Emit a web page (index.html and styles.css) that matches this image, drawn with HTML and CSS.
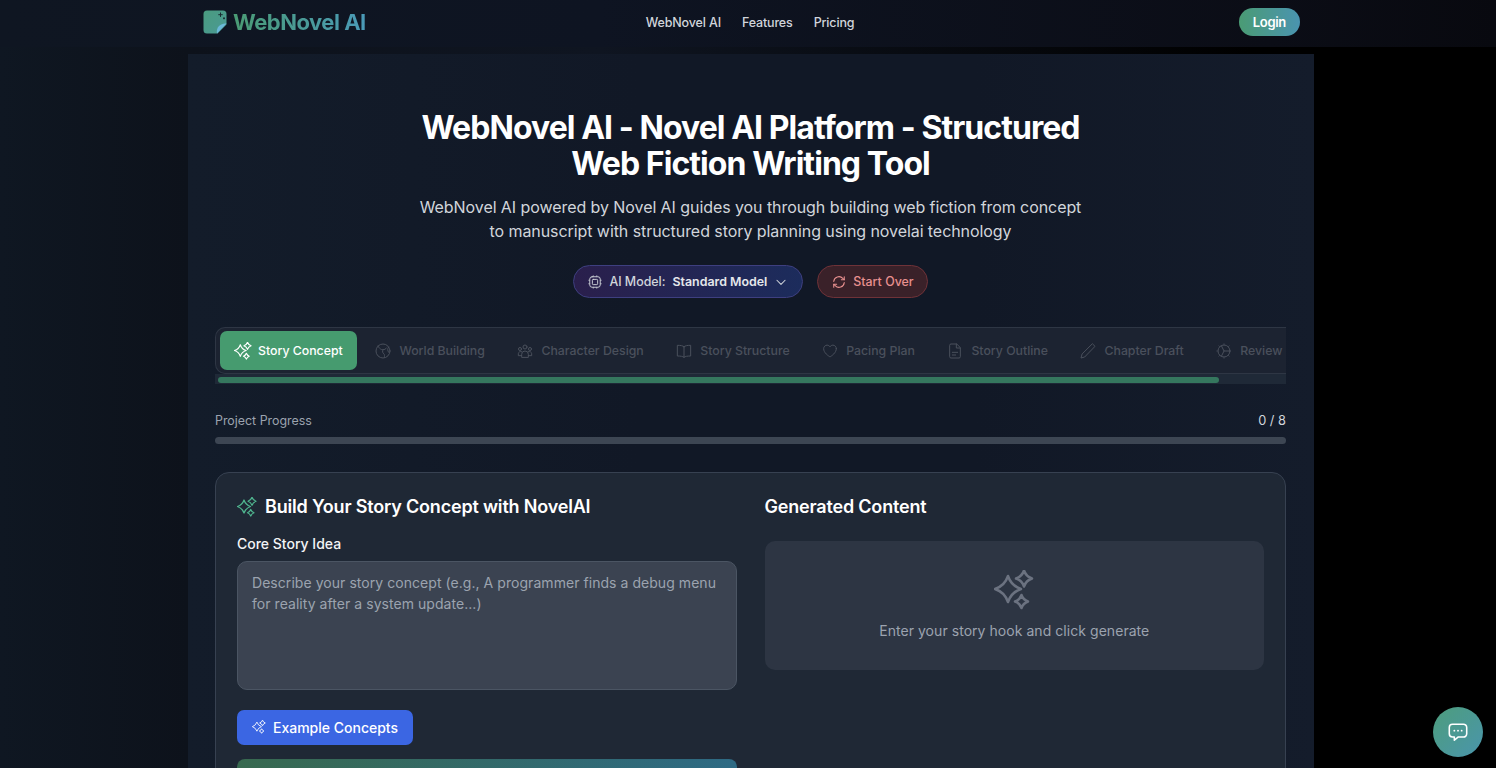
FILE: index.html
```html
<!DOCTYPE html>
<html lang="en">
<head>
    <meta charset="UTF-8">
    <meta name="viewport" content="width=device-width, initial-scale=1.0">
    <title>WebNovel AI</title>
    <link rel="stylesheet" href="styles.css">
</head>
<body>

    <!-- Shared sparkle icon -->
    <svg class="icon-defs" width="0" height="0">
        <symbol id="sparkles" viewBox="0 0 24 24">
            <path d="M8.400 3.600Q10.350 9.450 16.200 11.400Q10.350 13.350 8.400 19.200Q6.450 13.350 0.600 11.400Q6.450 9.450 8.400 3.600z"/>
            <path d="M18 0.300Q19.200 3.900 22.800 5.100Q19.200 6.300 18 9.900Q16.800 6.300 13.200 5.100Q16.800 3.900 18 0.300z"/>
            <path d="M16.500 15Q17.500 17.900 20.400 18.900Q17.500 19.900 16.500 22.800Q15.500 19.900 12.600 18.900Q15.500 17.900 16.500 15z"/>
        </symbol>
    </svg>

    <!-- Navbar -->
    <div class="navbar">
        <div class="navbar-inner">
            <a href="#" class="logo">
                <svg class="logo-mark" width="24" height="24" viewBox="0 0 24 24">
                    <defs>
                        <linearGradient id="logoFill" x1="0" y1="0" x2="1" y2="1">
                            <stop offset="0" stop-color="#4a9b7f"/>
                            <stop offset="1" stop-color="#4a9a94"/>
                        </linearGradient>
                    </defs>
                    <path d="M4 0.500h16a3.500 3.500 0 0 1 3.500 3.500v10.500l-9 9H4A3.500 3.500 0 0 1 0.500 20V4A3.500 3.500 0 0 1 4 0.500z" fill="url(#logoFill)"/>
                    <path d="M23.500 13.500l-9.500 10c-0.500-3 0-5.500 2-7.500s4.500-2.800 7.500-2.500z" fill="#6bb8d8"/>
                    <path d="M17.500 2.500v4.400M15.300 4.700h4.400M21 7.300v2M20 8.300h2" stroke="#1a2a30" stroke-width="1" fill="none"/>
                </svg>
                <span class="logo-text">WebNovel AI</span>
            </a>
            <div class="nav-links">
                <a href="#">WebNovel AI</a>
                <a href="#">Features</a>
                <a href="#">Pricing</a>
            </div>
            <a href="#" class="login-btn">Login</a>
        </div>
    </div>

    <div class="page">

        <!-- Hero -->
        <div class="hero">
            <h1>WebNovel AI - Novel AI Platform - Structured<br>Web Fiction Writing Tool</h1>
            <p>WebNovel AI powered by Novel AI guides you through building web fiction from concept<br>to manuscript with structured story planning using novelai technology</p>
            <div class="hero-actions">
                <button class="model-btn">
                    <svg width="14" height="14" viewBox="0 0 24 24" fill="none" stroke="currentColor" stroke-width="1.600" stroke-linecap="round" stroke-linejoin="round">
                        <rect x="3" y="3" width="18" height="18" rx="4"/>
                        <rect x="7.500" y="7.500" width="9" height="9" rx="1.500"/>
                        <path d="M9 1v2M15 1v2M9 21v2M15 21v2M1 9h2M1 15h2M21 9h2M21 15h2" stroke-width="1"/>
                    </svg>
                    <span>AI Model:</span>
                    <span class="model-name">Standard Model</span>
                    <svg width="14" height="14" viewBox="0 0 24 24" fill="none" stroke="currentColor" stroke-width="1.800" stroke-linecap="round" stroke-linejoin="round">
                        <path d="M5 9l7 7 7-7"/>
                    </svg>
                </button>
                <button class="restart-btn">
                    <svg width="14" height="14" viewBox="0 0 24 24" fill="none" stroke="currentColor" stroke-width="1.800" stroke-linecap="round" stroke-linejoin="round">
                        <path d="M3 11a9 9 0 0 1 15.500-5.300L21 8"/>
                        <path d="M21 3v5h-5"/>
                        <path d="M21 13a9 9 0 0 1-15.500 5.300L3 16"/>
                        <path d="M3 21v-5h5"/>
                    </svg>
                    <span>Start Over</span>
                </button>
            </div>
        </div>

        <!-- Steps -->
        <div class="steps-scroll">
            <div class="steps">
                <a href="#" class="step active">
                    <svg class="sparkle-line" width="18" height="18"><use href="#sparkles"/></svg>
                    Story Concept
                </a>
                <a href="#" class="step">
                    <svg width="16" height="16" viewBox="0 0 24 24" fill="none" stroke="currentColor" stroke-width="1.500" stroke-linecap="round" stroke-linejoin="round">
                        <circle cx="12" cy="12" r="10.500"/>
                        <path d="M4.500 4.500C7 9 9 10 12 10c2 0 4-.5 5-2.500M20.500 6c-2 3-2 5 0 8M12 10c-1.500 3-.5 5 1.500 6.500 1 1 1 3 .5 5"/>
                    </svg>
                    World Building
                </a>
                <a href="#" class="step">
                    <svg width="16" height="16" viewBox="0 0 24 24" fill="none" stroke="currentColor" stroke-width="1.500" stroke-linecap="round" stroke-linejoin="round">
                        <circle cx="12" cy="6" r="3"/>
                        <circle cx="4.500" cy="9" r="2.300"/>
                        <circle cx="19.500" cy="9" r="2.300"/>
                        <path d="M7 21v-4a5 5 0 0 1 10 0v4z"/>
                        <path d="M7 19H2v-3a3.500 3.500 0 0 1 5-3M17 19h5v-3a3.500 3.500 0 0 0-5-3"/>
                    </svg>
                    Character Design
                </a>
                <a href="#" class="step">
                    <svg width="16" height="16" viewBox="0 0 24 24" fill="none" stroke="currentColor" stroke-width="1.500" stroke-linecap="round" stroke-linejoin="round">
                        <path d="M12 5.500C10 4 7 3.500 2 3.500v16c5 0 8 .5 10 2 2-1.500 5-2 10-2v-16c-5 0-8 .5-10 2zM12 5.500v16"/>
                    </svg>
                    Story Structure
                </a>
                <a href="#" class="step">
                    <svg width="16" height="16" viewBox="0 0 24 24" fill="none" stroke="currentColor" stroke-width="1.500" stroke-linecap="round" stroke-linejoin="round">
                        <path d="M21.500 8.500c0-3-2.400-5.300-5.200-5.300-1.900 0-3.500 1-4.300 2.600-.8-1.600-2.400-2.600-4.300-2.600-2.800 0-5.200 2.300-5.200 5.300 0 6.500 7 10.500 9.500 12.500 2.500-2 9.500-6 9.500-12.500z"/>
                    </svg>
                    Pacing Plan
                </a>
                <a href="#" class="step">
                    <svg width="16" height="16" viewBox="0 0 24 24" fill="none" stroke="currentColor" stroke-width="1.500" stroke-linecap="round" stroke-linejoin="round">
                        <path d="M14 1.500H6a2 2 0 0 0-2 2v17a2 2 0 0 0 2 2h12a2 2 0 0 0 2-2V7.500z"/>
                        <path d="M14 1.500v6h6M8 14h8M8 18h5"/>
                    </svg>
                    Story Outline
                </a>
                <a href="#" class="step">
                    <svg width="16" height="16" viewBox="0 0 24 24" fill="none" stroke="currentColor" stroke-width="1.500" stroke-linecap="round" stroke-linejoin="round">
                        <path d="M19 1.500l3.500 3.500L7 21l-5.500 1.500L3 17z"/>
                    </svg>
                    Chapter Draft
                </a>
                <a href="#" class="step">
                    <svg width="16" height="16" viewBox="0 0 24 24" fill="none" stroke="currentColor" stroke-width="1.500" stroke-linecap="round" stroke-linejoin="round">
                        <circle cx="12" cy="12" r="9"/>
                        <path d="M8 4l4 8h9M12 12l-4 8"/>
                        <path d="M12 1v2M12 21v2M1 12h2M4.200 4.200l1.400 1.400M4.200 19.800l1.400-1.400M19.800 4.200l-1.400 1.400M19.800 19.800l-1.400-1.400" stroke-width="1"/>
                    </svg>
                    Review
                </a>
            </div>
            <div class="steps-track">
                <div class="steps-thumb"></div>
            </div>
        </div>

        <!-- Project progress -->
        <div class="progress-head">
            <span>Project Progress</span>
            <span class="progress-count">0 / 8</span>
        </div>
        <div class="progress-bar"></div>

        <!-- Story concept card -->
        <div class="card">
            <div class="card-col">
                <h2 class="card-title">
                    <svg class="sparkle-line sparkle-green" width="20" height="20"><use href="#sparkles"/></svg>
                    Build Your Story Concept with NovelAI
                </h2>
                <label class="field-label" for="idea">Core Story Idea</label>
                <textarea class="idea-input" id="idea" placeholder="Describe your story concept (e.g., A programmer finds a debug menu for reality after a system update...)"></textarea>
                <button class="example-btn">
                    <svg class="sparkle-line" width="14" height="14"><use href="#sparkles"/></svg>
                    Example Concepts
                </button>
                <div class="generate-btn"></div>
            </div>
            <div class="card-col">
                <h2 class="card-title">Generated Content</h2>
                <div class="output-box">
                    <svg class="sparkle-line" width="40" height="40"><use href="#sparkles"/></svg>
                    <p>Enter your story hook and click generate</p>
                </div>
            </div>
        </div>
    </div>

    <!-- Chat button -->
    <button class="chat-btn">
        <svg width="22" height="22" viewBox="0 0 24 24" fill="none" stroke="#fff" stroke-width="1.700" stroke-linecap="round" stroke-linejoin="round">
            <path d="M6 3.500h12a3.500 3.500 0 0 1 3.500 3.500v7a3.500 3.500 0 0 1-3.500 3.500h-6l-4 3.500v-3.500H6A3.500 3.500 0 0 1 2.500 14V7A3.500 3.500 0 0 1 6 3.500z"/>
            <path d="M8 10.500h.01M12 10.500h.01M16 10.500h.01" stroke-width="2"/>
        </svg>
    </button>

</body>
</html>
```

FILE: styles.css
```css
* {
    box-sizing: border-box;
}
html, body {
    height: 768px;
    overflow: hidden;
}
body {
    font-family: Inter, "Liberation Sans", sans-serif;
    background: linear-gradient(90deg, #0f1722 0, #0d121b 188px, #0f1521 600px, #000 1250px);
    margin: 0;
    padding: 0;
    color: #fff;
}
a {
    text-decoration: none;
    color: inherit;
}
button {
    font-family: inherit;
    cursor: pointer;
}
.icon-defs {
    position: absolute;
}
.sparkle-line {
    fill: none;
    stroke: currentColor;
    stroke-width: 1.500;
    stroke-linejoin: round;
    flex-shrink: 0;
}
.sparkle-green {
    color: #4fb58f;
}
/* Navbar */
.navbar {
    height: 47px;
    background: linear-gradient(90deg, #0f1622 0%, #0e1422 40%, #0b0d16 85%, #08090f 100%);
}
.navbar-inner {
    width: 1097px;
    height: 100%;
    margin-left: 203px;
    display: flex;
    align-items: center;
    padding-bottom: 3px;
}
.logo {
    display: flex;
    align-items: center;
    gap: 6px;
}
.logo-text {
    font-size: 22px;
    font-weight: 700;
    letter-spacing: -0.5px;
    background: linear-gradient(90deg, #4a9b74, #4a9ab8);
    -webkit-background-clip: text;
    background-clip: text;
    color: transparent;
}
.nav-links {
    display: flex;
    gap: 21px;
    margin-left: 280px;
    font-size: 12.500px;
    letter-spacing: -0.15px;
    font-weight: 500;
    color: #d1d5db;
}
.login-btn {
    margin-left: auto;
    padding: 0 14px;
    height: 28px;
    display: flex;
    align-items: center;
    border-radius: 14px;
    font-size: 13px;
    letter-spacing: -0.3px;
    font-weight: 600;
    background: linear-gradient(90deg, #4a9b74, #4a94b0);
}
/* Page panel */
.page {
    width: 1126px;
    height: 721px;
    margin: 7px 0 0 188px;
    padding: 0 28px 0 27px;
    background: linear-gradient(90deg, #131c2a 0%, #111826 40%, #111826 70%, #141c2b 100%);
    overflow: hidden;
}
/* Hero */
.hero {
    text-align: center;
    padding-top: 56px;
}
.hero h1 {
    margin: 0;
    font-size: 32px;
    line-height: 36px;
    font-weight: 700;
    letter-spacing: -0.94px;
}
.hero p {
    margin: 13px 0 0;
    font-size: 16px;
    line-height: 24px;
    letter-spacing: -0.07px;
    color: #d1d5db;
}
.hero-actions {
    display: flex;
    justify-content: center;
    gap: 14px;
    margin-top: 22px;
}
.model-btn, .restart-btn {
    height: 33px;
    display: flex;
    align-items: center;
    gap: 7px;
    border-radius: 17px;
    font-size: 12.400px;
    font-weight: 500;
}
.model-btn {
    padding: 0 14px 0 14.500px;
    color: #d1d5db;
    background: linear-gradient(90deg, #2a1f4c, #1c2c5c);
    border: 1px solid #3e3f80;
}
.model-name {
    font-weight: 600;
    color: #e5e7eb;
}
.restart-btn {
    padding: 0 13.500px 0 14px;
    color: #e8908f;
    background: #3a2129;
    border: 1px solid #6f3238;
}
/* Steps */
.steps-scroll {
    margin-top: 29px;
    height: 57px;
    overflow: hidden;
}
.steps {
    height: 47px;
    display: flex;
    align-items: center;
    padding: 0 4px;
    background: #1c2331;
    border: 1px solid #2e3644;
    border-right: none;
    border-radius: 10px 0 0 10px;
    white-space: nowrap;
    overflow: hidden;
}
.step {
    display: flex;
    align-items: center;
    flex-shrink: 0;
    gap: 8px;
    height: 39px;
    padding: 0 16.250px;
    border-radius: 7px;
    font-size: 12.300px;
    font-weight: 500;
    color: #4a505c;
}
.step.active {
    gap: 6px;
    padding: 0 14px;
    margin-right: 2.500px;
    background: #469b6f;
    color: #fff;
}
.steps-track {
    height: 10px;
    background: #1f2937;
    padding: 3px 3px 1px;
}
.steps-thumb {
    width: 1001px;
    height: 6px;
    background: #35775e;
    border-radius: 3px;
}
/* Project progress */
.progress-head {
    display: flex;
    justify-content: space-between;
    align-items: center;
    margin-top: 28px;
    font-size: 12.400px;
    line-height: 18px;
    color: #9ca3af;
}
.progress-count {
    font-size: 12.800px;
    color: #d1d5db;
}
.progress-bar {
    height: 7px;
    margin-top: 7px;
    border-radius: 4px;
    background: #3d4653;
}
/* Card */
.card {
    display: grid;
    grid-template-columns: 1fr 1fr;
    gap: 28px;
    margin-top: 28px;
    padding: 20px 21px;
    background: #1f2835;
    border: 1px solid #374151;
    border-radius: 14px;
    height: 420px;
}
.card-title {
    display: flex;
    align-items: center;
    gap: 8px;
    margin: 0;
    font-size: 18px;
    line-height: 28px;
    letter-spacing: -0.19px;
    font-weight: 600;
}
.field-label {
    display: block;
    margin-top: 13px;
    font-size: 14px;
    line-height: 20px;
    font-weight: 500;
    color: #f3f4f6;
}
.idea-input {
    display: block;
    width: 100%;
    height: 129px;
    margin-top: 7px;
    padding: 10px 14px;
    background: #3b4351;
    border: 1px solid #4b5563;
    border-radius: 10px;
    font-family: inherit;
    font-size: 14px;
    line-height: 21px;
    letter-spacing: 0.05px;
    color: #fff;
    resize: none;
}
.idea-input::placeholder {
    color: #9ca3af;
}
.example-btn {
    display: flex;
    align-items: center;
    gap: 7px;
    height: 35px;
    margin-top: 19.500px;
    padding: 0 15px;
    border: none;
    border-radius: 7px;
    background: #3b66e3;
    color: #fff;
    font-size: 14px;
    font-weight: 500;
}
.generate-btn {
    height: 40px;
    margin-top: 14.500px;
    border-radius: 8px;
    background: linear-gradient(90deg, #38694f, #2e6a84);
}
.output-box {
    display: flex;
    flex-direction: column;
    align-items: center;
    height: 129px;
    margin-top: 20px;
    padding-top: 29px;
    border-radius: 10px;
    background: #2d3543;
    color: #6b7280;
}
.output-box p {
    margin: 11px 0 0;
    font-size: 14px;
    line-height: 20px;
    letter-spacing: 0.05px;
    color: #9ca3af;
}
/* Chat button */
.chat-btn {
    position: fixed;
    right: 13px;
    bottom: 11px;
    width: 50px;
    height: 50px;
    display: flex;
    align-items: center;
    justify-content: center;
    padding: 0;
    border: none;
    border-radius: 50%;
    background: linear-gradient(135deg, #4d9d7c, #4a95ac);
}
```
